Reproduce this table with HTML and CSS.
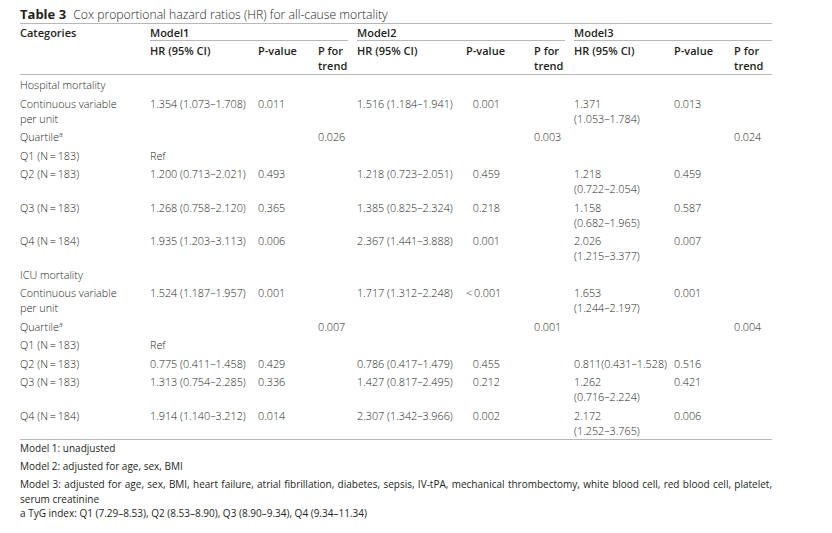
FILE: index.html
```html
<!DOCTYPE html>
<html lang="en">
<head>
<meta charset="utf-8">
<title>Table 3</title>
<link rel="stylesheet" href="styles.css">
</head>
<body>
<div class="page">
  <div class="caption"><span class="cap-label">Table 3</span> Cox proportional hazard ratios (HR) for all-cause mortality</div>
  <table class="tbl">
    <colgroup>
      <col class="c-cat">
      <col class="c-hr1"><col class="c-p1"><col class="c-t1">
      <col class="c-hr2"><col class="c-p2"><col class="c-t2">
      <col class="c-hr3"><col class="c-p3"><col class="c-t3">
    </colgroup>
    <thead>
      <tr class="hrow1">
        <th rowspan="2" class="cat">Categories</th>
        <th colspan="3" class="grp"><div class="grp-label">Model1</div></th>
        <th colspan="3" class="grp"><div class="grp-label">Model2</div></th>
        <th colspan="3" class="grp last"><div class="grp-label">Model3</div></th>
      </tr>
      <tr class="hrow2">
        <th>HR (95% CI)</th><th>P-value</th><th>P for<br>trend</th>
        <th>HR (95% CI)</th><th>P-value</th><th>P for<br>trend</th>
        <th>HR (95% CI)</th><th>P-value</th><th>P for<br>trend</th>
      </tr>
    </thead>
    <tbody>
      <tr><td colspan="10">Hospital mortality</td></tr>
      <tr>
        <td>Continuous variable<br>per unit</td>
        <td>1.354 (1.073–1.708)</td><td>0.011</td><td></td>
        <td>1.516 (1.184–1.941)</td><td class="r2">0.001</td><td></td>
        <td>1.371<br>(1.053–1.784)</td><td>0.013</td><td></td>
      </tr>
      <tr>
        <td>Quartile<sup>a</sup></td>
        <td></td><td></td><td>0.026</td>
        <td></td><td></td><td>0.003</td>
        <td></td><td></td><td>0.024</td>
      </tr>
      <tr>
        <td>Q1 (N&#8201;=&#8201;183)</td>
        <td>Ref</td><td></td><td></td>
        <td></td><td></td><td></td>
        <td></td><td></td><td></td>
      </tr>
      <tr>
        <td>Q2 (N&#8201;=&#8201;183)</td>
        <td>1.200 (0.713–2.021)</td><td>0.493</td><td></td>
        <td>1.218 (0.723–2.051)</td><td class="r2">0.459</td><td></td>
        <td>1.218<br>(0.722–2.054)</td><td>0.459</td><td></td>
      </tr>
      <tr>
        <td>Q3 (N&#8201;=&#8201;183)</td>
        <td>1.268 (0.758–2.120)</td><td>0.365</td><td></td>
        <td>1.385 (0.825–2.324)</td><td class="r2">0.218</td><td></td>
        <td>1.158<br>(0.682–1.965)</td><td>0.587</td><td></td>
      </tr>
      <tr>
        <td>Q4 (N&#8201;=&#8201;184)</td>
        <td>1.935 (1.203–3.113)</td><td>0.006</td><td></td>
        <td>2.367 (1.441–3.888)</td><td class="r2">0.001</td><td></td>
        <td>2.026<br>(1.215–3.377)</td><td>0.007</td><td></td>
      </tr>
      <tr><td colspan="10">ICU mortality</td></tr>
      <tr>
        <td>Continuous variable<br>per unit</td>
        <td>1.524 (1.187–1.957)</td><td>0.001</td><td></td>
        <td>1.717 (1.312–2.248)</td><td class="r2">&lt;&#8201;0.001</td><td></td>
        <td>1.653<br>(1.244–2.197)</td><td>0.001</td><td></td>
      </tr>
      <tr>
        <td>Quartile<sup>a</sup></td>
        <td></td><td></td><td>0.007</td>
        <td></td><td></td><td>0.001</td>
        <td></td><td></td><td>0.004</td>
      </tr>
      <tr>
        <td>Q1 (N&#8201;=&#8201;183)</td>
        <td>Ref</td><td></td><td></td>
        <td></td><td></td><td></td>
        <td></td><td></td><td></td>
      </tr>
      <tr>
        <td>Q2 (N&#8201;=&#8201;183)</td>
        <td>0.775 (0.411–1.458)</td><td>0.429</td><td></td>
        <td>0.786 (0.417–1.479)</td><td class="r2">0.455</td><td></td>
        <td class="nowrap">0.811(0.431–1.528)</td><td>0.516</td><td></td>
      </tr>
      <tr>
        <td>Q3 (N&#8201;=&#8201;183)</td>
        <td>1.313 (0.754–2.285)</td><td>0.336</td><td></td>
        <td>1.427 (0.817–2.495)</td><td class="r2">0.212</td><td></td>
        <td>1.262<br>(0.716–2.224)</td><td>0.421</td><td></td>
      </tr>
      <tr>
        <td>Q4 (N&#8201;=&#8201;184)</td>
        <td>1.914 (1.140–3.212)</td><td>0.014</td><td></td>
        <td>2.307 (1.342–3.966)</td><td class="r2">0.002</td><td></td>
        <td>2.172<br>(1.252–3.765)</td><td>0.006</td><td></td>
      </tr>
    </tbody>
  </table>
  <div class="notes">
    <p class="note">Model 1: unadjusted</p>
    <p class="note">Model 2: adjusted for age, sex, BMI</p>
    <p class="note tight"><span class="just">Model 3: adjusted for age, sex, BMI, heart failure, atrial fibrillation, diabetes, sepsis, IV-tPA, mechanical thrombectomy, white blood cell, red blood cell, platelet,</span>serum creatinine</p>
    <p class="note">a TyG index: Q1 (7.29–8.53), Q2 (8.53–8.90), Q3 (8.90–9.34), Q4 (9.34–11.34)</p>
  </div>
</div>
</body>
</html>
```
FILE: styles.css
```css
html, body {
  margin: 0;
  padding: 0;
  background: #ffffff;
}

body {
  font-family: "Open Sans", "Liberation Sans", sans-serif;
  color: #231f20;
}

.page {
  width: 752px;
  padding: 7px 0 0 20px;
}

.caption {
  height: 16px;
  font-size: 12.2px;
  line-height: 16px;
  font-weight: 300;
  border-bottom: 1px solid #b8b8b8;
  white-space: nowrap;
}

.cap-label {
  font-size: 13px;
  line-height: 1;
  font-weight: 700;
  margin-right: 4px;
}

.tbl {
  width: 752px;
  table-layout: fixed;
  border-collapse: collapse;
  font-size: 10.8px;
  line-height: 15px;
}

.c-cat { width: 130px; }
.c-hr1 { width: 108px; }
.c-p1  { width: 60px; }
.c-t1  { width: 39px; }
.c-hr2 { width: 109px; }
.c-p2  { width: 68px; }
.c-t2  { width: 40px; }
.c-hr3 { width: 100px; }
.c-p3  { width: 60px; }
.c-t3  { width: 38px; }

.tbl th {
  font-size: 11px;
  font-weight: 600;
  text-align: left;
  vertical-align: top;
  padding: 1.5px 0 1.5px 0;
}

.tbl thead {
  border-bottom: 1px solid #b8b8b8;
}

.hrow1 th {
  padding-top: 0.5px;
  padding-bottom: 0;
}

.tbl th.grp {
  padding-right: 9px;
}

.tbl th.grp.last {
  padding-right: 0;
}

.grp-label {
  border-bottom: 1px solid #b8b8b8;
  padding-bottom: 0.5px;
}

.tbl td {
  font-weight: 300;
  vertical-align: top;
  padding: 2px 0 1.5px 0;
  white-space: nowrap;
}

.tbl tbody {
  border-bottom: 1px solid #b8b8b8;
}

.tbl td.r2 {
  text-align: right;
  padding-right: 34px;
}

sup {
  font-size: 7px;
  line-height: 0;
  vertical-align: 4px;
}

.notes {
  padding-top: 1px;
  font-size: 10px;
  line-height: 14.5px;
  font-weight: 400;
}

.note {
  margin: 0;
  padding: 0 0 3.5px 0;
}

.note.tight {
  padding-bottom: 0;
}

.just {
  display: block;
  text-align: justify;
  text-align-last: justify;
}
```
